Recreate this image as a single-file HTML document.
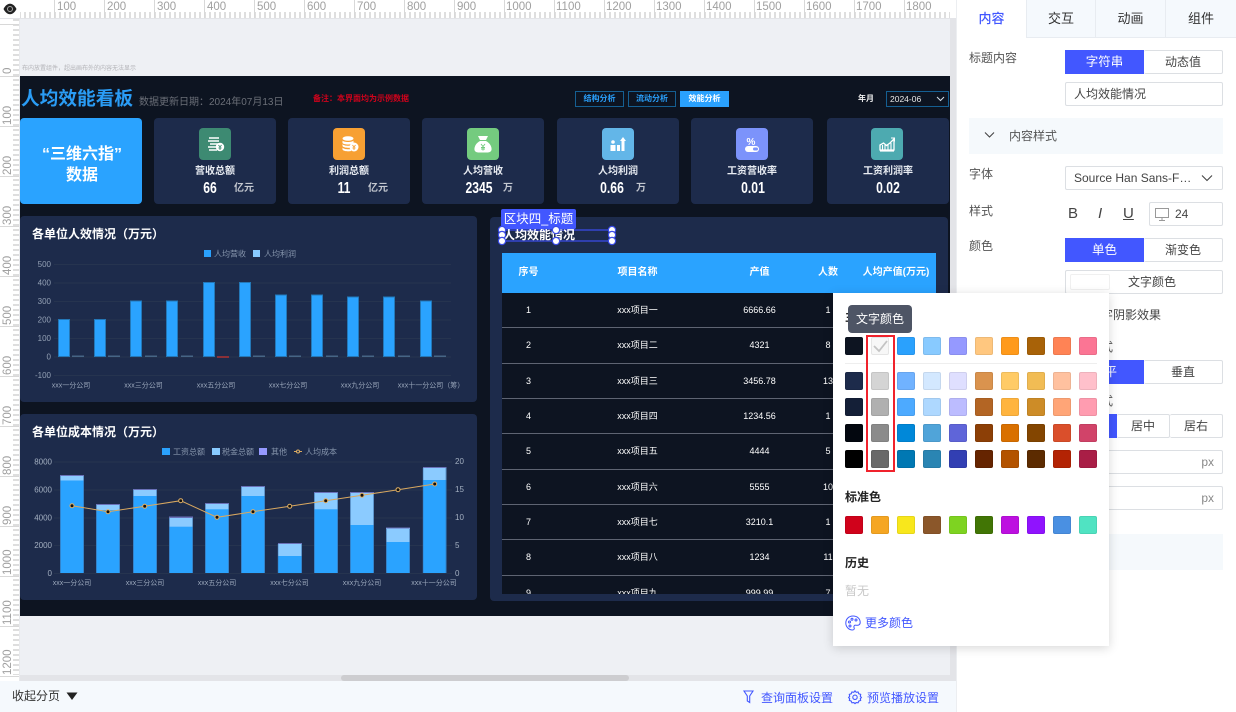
<!DOCTYPE html>
<html lang="zh"><head><meta charset="utf-8"><title>人均效能看板</title>
<style>
*{box-sizing:border-box}
html,body{margin:0;padding:0;width:1236px;height:712px;overflow:hidden;background:#eef0f4;font-family:"Liberation Sans","Noto Sans CJK SC",sans-serif}
.a{position:absolute}
.t{position:absolute;white-space:nowrap;line-height:1}
.c{transform:translateX(-50%)}
.card{position:absolute;top:118px;width:122px;height:86px;background:#1d2b4b;border-radius:4px}
.ic{position:absolute;top:128px;width:32px;height:32px;border-radius:4px}
.lb{position:absolute;top:166px;font-size:10px;font-weight:700;line-height:11px;color:#e8ecf2;white-space:nowrap;transform:translateX(-50%)}
.val{position:absolute;top:180px;font-size:16px;font-weight:700;line-height:17px;color:#fff;white-space:nowrap;transform:translateX(-50%) scaleX(.76)}
.unit{position:absolute;top:183px;font-size:10px;font-weight:700;line-height:11px;color:#c4c8d0;white-space:nowrap}
.panel{position:absolute;background:#1d2b4b;border-radius:4px}
.tab{position:absolute;top:0;height:38px;background:#f5f9fd;border-bottom:1px solid #e8ecf1;border-left:1px solid #e8ecf1;font-size:13px;line-height:37px;text-align:center;color:#333}
.lbl{position:absolute;left:969px;font-size:12px;line-height:14px;color:#555;white-space:nowrap}
.box{position:absolute;background:#fff;border:1px solid #dcdfe3;border-radius:2px;font-size:12px;line-height:22px;color:#444;white-space:nowrap}
.blue{position:absolute;background:#4257ff;color:#fff;font-size:12.5px;line-height:24px;text-align:center}
.row{position:relative;height:35.33px;border-bottom:1px solid #5e6472;font-size:9px;line-height:34px;color:#fff}
.row span{position:absolute;transform:translateX(-50%);white-space:nowrap}
.h{position:absolute;width:6px;height:6px;border-radius:50%;background:#fff;box-shadow:0 0 0 1.2px #3a4be8}
.sw{display:grid;grid-template-columns:repeat(10,18px);column-gap:8px;row-gap:8px;position:absolute;left:845px}
.sw i{display:block;width:18px;height:18px;border-radius:2px;box-shadow:inset 0 0 0 1px rgba(0,0,0,.07)}
.btn{position:absolute;top:91px;height:16px;border:1px solid #155f92;font-size:8px;line-height:14px;text-align:center;color:#2aa1fd;font-weight:700}
svg{position:absolute;overflow:visible}
svg text{font-family:"Liberation Sans","Noto Sans CJK SC",sans-serif}
</style></head><body>

<!-- rulers -->
<div class="a" style="left:0;top:0;width:956px;height:19px;background:#fff;border-bottom:1px solid #e3e4e8"></div>
<div class="a" style="left:20px;top:12px;width:930px;height:6px;background:repeating-linear-gradient(90deg,#dedede 0 2px,#fff 2px 5px);background-position:4px 0"></div>
<svg style="left:0;top:0" width="956" height="19">
<g stroke="#d8d8d8" stroke-width="1"><path d="M54.500 0V18M104.500 0V18M154.500 0V18M204.500 0V18M254.500 0V18M304.500 0V18M354.500 0V18M404.500 0V18M454.500 0V18M504.500 0V18M554.500 0V18M604.500 0V18M654.500 0V18M704.500 0V18M754.500 0V18M804.500 0V18M854.500 0V18M904.500 0V18"/></g>
<g font-size="11.500" fill="#a0a0a0">
<text x="57" y="10">100</text><text x="107" y="10">200</text><text x="157" y="10">300</text><text x="207" y="10">400</text><text x="257" y="10">500</text><text x="307" y="10">600</text><text x="357" y="10">700</text><text x="407" y="10">800</text><text x="457" y="10">900</text><text x="506" y="10">1000</text><text x="556" y="10">1100</text><text x="606" y="10">1200</text><text x="656" y="10">1300</text><text x="706" y="10">1400</text><text x="756" y="10">1500</text><text x="806" y="10">1600</text><text x="856" y="10">1700</text><text x="906" y="10">1800</text>
</g></svg>
<div class="a" style="left:0;top:19px;width:20px;height:662px;background:#fff;border-right:1px solid #e8e9ec"></div>
<div class="a" style="left:13px;top:19px;width:6px;height:656px;background:repeating-linear-gradient(180deg,#dedede 0 2px,#fff 2px 5px)"></div>
<svg style="left:0;top:0" width="20" height="682">
<g stroke="#d8d8d8"><path d="M0 76.500H19M0 126.500H19M0 176.500H19M0 226.500H19M0 276.500H19M0 326.500H19M0 376.500H19M0 426.500H19M0 476.500H19M0 526.500H19M0 576.500H19M0 626.500H19M0 676.500H19M0 24.500H19"/></g>
<g font-size="11.500" fill="#a0a0a0">
<text transform="translate(11,74) rotate(-90)">0</text>
<text transform="translate(11,125) rotate(-90)">100</text><text transform="translate(11,175) rotate(-90)">200</text><text transform="translate(11,225) rotate(-90)">300</text><text transform="translate(11,275) rotate(-90)">400</text><text transform="translate(11,325) rotate(-90)">500</text><text transform="translate(11,375) rotate(-90)">600</text><text transform="translate(11,425) rotate(-90)">700</text><text transform="translate(11,475) rotate(-90)">800</text><text transform="translate(11,525) rotate(-90)">900</text><text transform="translate(11,575) rotate(-90)">1000</text><text transform="translate(11,625) rotate(-90)">1100</text><text transform="translate(11,675) rotate(-90)">1200</text>
</g></svg>
<div class="a" style="left:0;top:0;width:20px;height:18px;background:#fff"></div>
<svg style="left:3px;top:3px" width="14" height="12" viewBox="0 0 14 12"><path d="M0.500 6C2.500 2 5 0.800 7 0.800S11.500 2 13.500 6C11.500 10 9 11.200 7 11.200S2.500 10 0.500 6Z" fill="#222"/><circle cx="7" cy="6" r="2.500" fill="none" stroke="#aaa" stroke-width="1"/></svg>

<div class="t" style="left:22px;top:66px;font-size:6px;color:#b4b4b8">布内放置组件，超出画布外的内容无法显示</div>

<!-- dashboard -->
<div class="a" style="left:20px;top:76px;width:930px;height:540px;background:#0d1421"></div>
<div class="t" style="left:21px;top:90px;font-size:18.700px;font-weight:700;color:#2a9cf5">人均效能看板</div>
<div class="t" style="left:139px;top:98px;font-size:10px;color:#6b6f78">数据更新日期：2024年07月13日</div>
<div class="t" style="left:313px;top:95px;font-size:8px;font-weight:700;color:#d0021b">备注：本界面均为示例数据</div>
<div class="btn" style="left:575px;width:49px">结构分析</div>
<div class="btn" style="left:628px;width:48px">流动分析</div>
<div class="btn" style="left:680px;width:49px;background:#2aa1fd;border-color:#2aa1fd;color:#fff">效能分析</div>
<div class="t" style="left:858px;top:95px;font-size:8px;font-weight:700;color:#f0f0f0">年月</div>
<div class="btn" style="left:886px;width:63px;color:#e8e8e8;text-align:left;padding-left:3px;font-size:8.500px;font-weight:400">2024-06</div>
<svg style="left:936px;top:96px" width="10" height="6"><path d="M1 1L4.500 4.500L8 1" fill="none" stroke="#d8e0e8" stroke-width="1"/></svg>

<div class="card" style="left:20px;background:#2aa3ff"></div>
<div class="t c" style="left:82px;top:147px;font-size:16px;font-weight:700;color:#fff">“三维六指”</div>
<div class="t c" style="left:82px;top:168px;font-size:16px;font-weight:700;color:#fff">数据</div>

<div class="card" style="left:154px"></div>
<div class="card" style="left:288px"></div>
<div class="card" style="left:422px"></div>
<div class="card" style="left:557px"></div>
<div class="card" style="left:691px"></div>
<div class="card" style="left:827px"></div>

<div class="ic" style="left:199px;background:#3d8a72"></div>
<svg style="left:199px;top:128px" width="32" height="32"><path d="M10 10H20M9 13H20M11 16H19M9 19H17M10 22H18" stroke="#fff" stroke-width="1.500"/><circle cx="21" cy="19" r="4.200" fill="#fff"/><path d="M19.500 17L21 19L22.500 17M21 19V22M19.500 20H22.500" stroke="#3d8a72" stroke-width=".9" fill="none"/></svg>
<div class="ic" style="left:333px;background:#f7a033"></div>
<svg style="left:333px;top:128px" width="32" height="32"><ellipse cx="15" cy="10.500" rx="5.500" ry="2.300" fill="#fff"/><path d="M9.500 12.500c1 2 10 2 11 0V15c-1 2-10 2-11 0ZM9.500 16c1 2 7 2 8 1.500v2c-1 .6-7 .5-8-1.500ZM9.500 19.500c1 2 7 2 8.500 1.500v2c-2 .6-7.500.5-8.500-1.500Z" fill="#fff"/><circle cx="21" cy="19" r="4.500" fill="#fff"/><path d="M19.500 17L21 19L22.500 17M21 19V22M19.500 20H22.500" stroke="#f7a033" stroke-width=".9" fill="none"/></svg>
<div class="ic" style="left:467px;background:#74cb7f"></div>
<svg style="left:467px;top:128px" width="32" height="32"><path d="M11 8H21L19 12H13Z" fill="#fff"/><path d="M13 13H19C23 15 25 19 24.500 22C24 24 22 24.500 20 24.500H12C10 24.500 8 24 7.500 22C7 19 9 15 13 13Z" fill="#fff"/><path d="M14 16L16 18.500L18 16M16 18.500V22.500M14 19.500H18M14 21H18" stroke="#74cb7f" stroke-width="1" fill="none"/></svg>
<div class="ic" style="left:601.500px;background:#63b6e8"></div>
<svg style="left:601.500px;top:128px" width="32" height="32"><circle cx="11" cy="14" r="1.800" fill="#fff"/><path d="M8.500 17H13.500V23H8.500Z" fill="#fff"/><rect x="15" y="17" width="3" height="6" fill="#fff"/><path d="M19.500 23V13H18L21 9L24 13H22.500V23Z" fill="#fff"/></svg>
<div class="ic" style="left:736px;background:#7c93fb"></div>
<svg style="left:736px;top:128px" width="32" height="32"><text x="10.500" y="17" font-size="10" font-weight="700" fill="#fff">%</text><rect x="9" y="18" width="14" height="6" rx="3" fill="#fff"/><rect x="17" y="19.500" width="5" height="3" rx="1.500" fill="#7c93fb"/></svg>
<div class="ic" style="left:871px;background:#4daab0"></div>
<svg style="left:871px;top:128px" width="32" height="32"><path d="M9 23H23" stroke="#fff" stroke-width="1.200"/><path d="M9 22V17L12.500 15L15.500 17.500L19 15L23 11V22Z" fill="none" stroke="#fff" stroke-width="1.300"/><path d="M11.500 22V17M14 22V17M17 22V17M20 22V15" stroke="#fff" stroke-width="1.100"/><path d="M20 10H23.500V13.500" fill="none" stroke="#fff" stroke-width="1"/></svg>

<div class="lb" style="left:215px">营收总额</div><div class="val" style="left:209.500px">66</div><div class="unit" style="left:234px">亿元</div>
<div class="lb" style="left:349px">利润总额</div><div class="val" style="left:344px">11</div><div class="unit" style="left:368px">亿元</div>
<div class="lb" style="left:483px">人均营收</div><div class="val" style="left:478.500px">2345</div><div class="unit" style="left:503px">万</div>
<div class="lb" style="left:618px">人均利润</div><div class="val" style="left:612px">0.66</div><div class="unit" style="left:636px">万</div>
<div class="lb" style="left:752px">工资营收率</div><div class="val" style="left:752.500px">0.01</div>
<div class="lb" style="left:888px">工资利润率</div><div class="val" style="left:888px">0.02</div>

<!-- chart 1 -->
<div class="panel" style="left:20px;top:216px;width:457px;height:186px"></div>
<div class="t" style="left:32px;top:228px;font-size:12px;font-weight:700;color:#fff">各单位人效情况（万元）</div>
<svg style="left:0;top:0" width="480" height="410">
<g stroke="#26344f"><path d="M54 264.500H451M54 283H451M54 301.500H451M54 320H451M54 338.500H451M54 357H451M54 375.500H451"/></g>
<g font-size="8" fill="#93a0b4" text-anchor="end"><text x="51" y="267">500</text><text x="51" y="285.500">400</text><text x="51" y="304">300</text><text x="51" y="322.500">200</text><text x="51" y="341">100</text><text x="51" y="359.500">0</text><text x="51" y="378">-100</text></g>
<g fill="#2aa3ff" stroke="#2478b8" stroke-width="1">
<rect x="58.500" y="319.500" width="11" height="37"/><rect x="94.500" y="319.500" width="11" height="37"/><rect x="130.500" y="301" width="11" height="55.500"/><rect x="166.500" y="301" width="11" height="55.500"/><rect x="203.500" y="282.500" width="11" height="74"/><rect x="239.500" y="282.500" width="11" height="74"/><rect x="275.500" y="295" width="11" height="61.500"/><rect x="311.500" y="295" width="11" height="61.500"/><rect x="347.500" y="297" width="11" height="59.500"/><rect x="383.500" y="297" width="11" height="59.500"/><rect x="420.500" y="301" width="11" height="55.500"/></g>
<g fill="#466585"><rect x="72" y="355.500" width="12" height="1.500"/><rect x="108" y="355.500" width="12" height="1.500"/><rect x="145" y="355.500" width="12" height="1.500"/><rect x="181" y="355.500" width="12" height="1.500"/><rect x="253" y="355.500" width="12" height="1.500"/><rect x="289" y="355.500" width="12" height="1.500"/><rect x="326" y="355.500" width="12" height="1.500"/><rect x="362" y="355.500" width="12" height="1.500"/><rect x="398" y="355.500" width="12" height="1.500"/><rect x="434" y="355.500" width="12" height="1.500"/></g>
<rect x="217" y="356" width="12" height="2" fill="#8a3038"/>
<rect x="204" y="250" width="7" height="7" fill="#2aa1fd"/><rect x="253" y="250" width="7" height="7" fill="#88caff"/>
<g font-size="8" fill="#8796ad"><text x="214" y="256.500">人均营收</text><text x="264" y="256.500">人均利润</text></g>
<g font-size="7" fill="#9aa7bb" text-anchor="middle"><text x="71" y="387.500">xxx一分公司</text><text x="143.500" y="387.500">xxx三分公司</text><text x="216" y="387.500">xxx五分公司</text><text x="288" y="387.500">xxx七分公司</text><text x="360" y="387.500">xxx九分公司</text><text x="431" y="387.500">xxx十一分公司（筹）</text></g>
</svg>

<!-- chart 2 -->
<div class="panel" style="left:20px;top:414px;width:457px;height:186px"></div>
<div class="t" style="left:32px;top:426px;font-size:12px;font-weight:700;color:#fff">各单位成本情况（万元）</div>
<svg style="left:0;top:0" width="480" height="610">
<g stroke="#26344f"><path d="M54 462H452M54 490H452M54 518H452M54 545.500H452M54 573.500H452"/></g>
<g font-size="8" fill="#a3afc0" text-anchor="end"><text x="52" y="464.500">8000</text><text x="52" y="492.500">6000</text><text x="52" y="520.500">4000</text><text x="52" y="548">2000</text><text x="52" y="576">0</text></g>
<g font-size="8" fill="#a3afc0"><text x="455" y="464">20</text><text x="455" y="492">15</text><text x="455" y="520">10</text><text x="455" y="548">5</text><text x="455" y="576">0</text></g>
<g fill="#6a71b8"><rect x="60" y="475" width="24" height="1.500"/><rect x="96" y="504" width="24" height="1.500"/><rect x="133" y="489" width="24" height="1.500"/><rect x="169" y="516.500" width="24" height="1.500"/><rect x="205" y="503" width="24" height="1.500"/><rect x="241" y="486" width="24" height="1.500"/><rect x="278" y="543" width="24" height="1.500"/><rect x="314" y="492" width="24" height="1.500"/><rect x="350" y="492" width="24" height="1.500"/><rect x="386" y="527.500" width="24" height="1.500"/><rect x="423" y="467" width="23.500" height="1.500"/></g>
<g fill="#8bcbff"><rect x="60" y="476" width="24" height="5"/><rect x="96" y="505" width="24" height="6"/><rect x="133" y="490" width="24" height="7"/><rect x="169" y="518" width="24" height="9"/><rect x="205" y="504" width="24" height="6"/><rect x="241" y="487" width="24" height="10"/><rect x="278" y="544" width="24" height="13"/><rect x="314" y="493" width="24" height="17"/><rect x="350" y="493" width="24" height="33"/><rect x="386" y="528.500" width="24" height="14"/><rect x="423" y="468" width="23.500" height="13"/></g>
<g fill="#2aa3ff"><rect x="60" y="480.500" width="24" height="92.500"/><rect x="96" y="510" width="24" height="63"/><rect x="133" y="496" width="24" height="77"/><rect x="169" y="526.700" width="24" height="46.300"/><rect x="205" y="509.300" width="24" height="63.700"/><rect x="241" y="496" width="24" height="77"/><rect x="278" y="556" width="24" height="17"/><rect x="314" y="509.300" width="24" height="63.700"/><rect x="350" y="525" width="24" height="48"/><rect x="386" y="542" width="24" height="31"/><rect x="423" y="480" width="23.500" height="93"/></g>
<g stroke="#3a6aa0" fill="none"><path d="M60.500 573V476M83.500 573V476M96.500 573V505M119.500 573V505M133.500 573V490M156.500 573V490M169.500 573V518M192.500 573V518M205.500 573V504M228.500 573V504M241.500 573V487M264.500 573V487M278 573V544M301.500 573V544M314.500 573V493M337.500 573V493M350.500 573V493M373.500 573V493M386.500 573V529M409.500 573V529M423 573V468M446 573V468" opacity=".55"/></g>
<polyline points="72,505.700 108,511.700 144.700,506.300 180.700,500.700 217,517.300 253,511.700 289.700,506.300 325.700,500.700 362,495.300 398,489.700 434.700,484" fill="none" stroke="#d9a860" stroke-width="1"/>
<g fill="#111" stroke="#e0b066" stroke-width="1"><circle cx="72" cy="505.700" r="2"/><circle cx="108" cy="511.700" r="2"/><circle cx="144.700" cy="506.300" r="2"/><circle cx="180.700" cy="500.700" r="2"/><circle cx="217" cy="517.300" r="2"/><circle cx="253" cy="511.700" r="2"/><circle cx="289.700" cy="506.300" r="2"/><circle cx="325.700" cy="500.700" r="2"/><circle cx="362" cy="495.300" r="2"/><circle cx="398" cy="489.700" r="2"/><circle cx="434.700" cy="484" r="2"/></g>
<rect x="162" y="448" width="8" height="7" fill="#2aa1fd"/><rect x="212" y="448" width="8" height="7" fill="#88caff"/><rect x="259" y="448" width="8" height="7" fill="#9599ff"/>
<path d="M294 451.500H302" stroke="#d9a860"/><circle cx="298" cy="451.500" r="1.500" fill="#1d2b4b" stroke="#e0b066"/>
<g font-size="8" fill="#8796ad"><text x="173" y="454.500">工资总额</text><text x="222" y="454.500">税金总额</text><text x="271" y="454.500">其他</text><text x="305" y="454.500">人均成本</text></g>
<g font-size="7" fill="#9aa7bb" text-anchor="middle"><text x="72" y="585">xxx一分公司</text><text x="145" y="585">xxx三分公司</text><text x="217" y="585">xxx五分公司</text><text x="289.500" y="585">xxx七分公司</text><text x="362" y="585">xxx九分公司</text><text x="434" y="585">xxx十一分公司</text></g>
</svg>

<!-- table panel -->
<div class="panel" style="left:490px;top:217px;width:458px;height:384px"></div>
<div class="a" style="left:502px;top:253px;width:434px;height:341px;overflow:hidden;background:#0d1421">
 <div style="height:40px;background:#2aa3ff;position:relative;font-size:10px;font-weight:700;line-height:40px;color:#fff">
  <span class="t c" style="left:26.500px;line-height:40px">序号</span><span class="t c" style="left:135.500px;line-height:40px">项目名称</span><span class="t c" style="left:257.500px;line-height:40px">产值</span><span class="t c" style="left:326px;line-height:40px">人数</span><span class="t c" style="left:394px;line-height:40px">人均产值(万元)</span>
 </div>
 <div class="row"><span style="left:26.500px">1</span><span style="left:135.500px">xxx项目一</span><span style="left:257.500px">6666.66</span><span style="left:326px">1</span></div>
 <div class="row"><span style="left:26.500px">2</span><span style="left:135.500px">xxx项目二</span><span style="left:257.500px">4321</span><span style="left:326px">8</span></div>
 <div class="row"><span style="left:26.500px">3</span><span style="left:135.500px">xxx项目三</span><span style="left:257.500px">3456.78</span><span style="left:326px">13</span></div>
 <div class="row"><span style="left:26.500px">4</span><span style="left:135.500px">xxx项目四</span><span style="left:257.500px">1234.56</span><span style="left:326px">1</span></div>
 <div class="row"><span style="left:26.500px">5</span><span style="left:135.500px">xxx项目五</span><span style="left:257.500px">4444</span><span style="left:326px">5</span></div>
 <div class="row"><span style="left:26.500px">6</span><span style="left:135.500px">xxx项目六</span><span style="left:257.500px">5555</span><span style="left:326px">10</span></div>
 <div class="row"><span style="left:26.500px">7</span><span style="left:135.500px">xxx项目七</span><span style="left:257.500px">3210.1</span><span style="left:326px">1</span></div>
 <div class="row"><span style="left:26.500px">8</span><span style="left:135.500px">xxx项目八</span><span style="left:257.500px">1234</span><span style="left:326px">11</span></div>
 <div class="row"><span style="left:26.500px">9</span><span style="left:135.500px">xxx项目九</span><span style="left:257.500px">999.99</span><span style="left:326px">7</span></div>
</div>
<div class="a" style="left:501px;top:229px;width:110px;height:13px;border:2px solid #2f3fae"></div>
<div class="t" style="left:503px;top:229px;font-size:12px;font-weight:700;color:#fff">人均效能情况</div>
<div class="a" style="left:501px;top:208.500px;width:75px;height:20px;background:#4257ff;border-radius:2px;color:#fff;font-size:12.500px;line-height:20px;text-align:center">区块四_标题</div>
<div class="h" style="left:498.500px;top:226.500px"></div><div class="h" style="left:498.500px;top:232px"></div><div class="h" style="left:498.500px;top:238px"></div>
<div class="h" style="left:553px;top:226.500px"></div><div class="h" style="left:553px;top:238px"></div>
<div class="h" style="left:608.500px;top:226.500px"></div><div class="h" style="left:608.500px;top:232px"></div><div class="h" style="left:608.500px;top:238px"></div>

<!-- scrollbars -->
<div class="a" style="left:950px;top:19px;width:6px;height:662px;background:#e3e4e8"></div>
<div class="a" style="left:20px;top:675px;width:930px;height:6px;background:#e3e4e8"></div>
<div class="a" style="left:341px;top:675px;width:288px;height:6px;background:#cdcdd0;border-radius:3px"></div>

<!-- bottom bar -->
<div class="a" style="left:0;top:681px;width:956px;height:31px;background:#f5f9fd"></div>
<div class="t" style="left:12px;top:690px;font-size:12px;color:#333">收起分页</div>
<svg style="left:66px;top:692px" width="12" height="9"><path d="M0.500 0.500H11.500L6 8Z" fill="#222"/></svg>
<svg style="left:743px;top:690px" width="11" height="14" fill="none" stroke="#4257ff" stroke-width="1.100"><path d="M1 1H10L6.700 6V12.500L4.300 11V6Z"/></svg>
<div class="t" style="left:761px;top:692px;font-size:12px;color:#4257ff">查询面板设置</div>
<svg style="left:848px;top:690px" width="14" height="14" viewBox="0 0 14 14" fill="none" stroke="#4257ff" stroke-width="1.100"><path d="M7 .8L8.200 2.300L10.100 2L10.800 3.800L12.700 4.400L12.300 6.300L13.400 7.500L12.300 8.700L12.700 10.400L10.800 11.100L10.100 12.800L8.200 12.600L7 13.600L5.800 12.600L3.900 12.800L3.200 11.100L1.300 10.400L1.700 8.700L.6 7.500L1.700 6.300L1.300 4.400L3.200 3.800L3.900 2L5.800 2.300Z"/><circle cx="7" cy="7.300" r="2.200"/></svg>
<div class="t" style="left:867px;top:692px;font-size:12px;color:#4257ff">预览播放设置</div>

<!-- right panel -->
<div class="a" style="left:956px;top:0;width:280px;height:712px;background:#fff;border-left:1px solid #eceef1"></div>
<div class="tab" style="left:957px;width:69px;background:#fff;border-left:none;border-bottom:none;color:#4257ff;font-weight:500">内容</div>
<div class="tab" style="left:1026px;width:69px">交互</div>
<div class="tab" style="left:1095px;width:70px">动画</div>
<div class="tab" style="left:1165px;width:71px">组件</div>

<div class="lbl" style="top:51px">标题内容</div>
<div class="blue" style="left:1065px;top:50px;width:79px">字符串</div>
<div class="box" style="left:1144px;top:50px;width:79px;height:24px;text-align:center;border-left:none">动态值</div>
<div class="box" style="left:1065px;top:82px;width:158px;height:24px;padding-left:8px">人均效能情况</div>
<div class="a" style="left:969px;top:118px;width:254px;height:36px;background:#f5f9fc"></div>
<svg style="left:984px;top:131px" width="12" height="8"><path d="M1 1.500L5.500 6L10 1.500" fill="none" stroke="#444" stroke-width="1.100"/></svg>
<div class="t" style="left:1009px;top:130px;font-size:12px;color:#555">内容样式</div>
<div class="lbl" style="top:167px">字体</div>
<div class="box" style="left:1065px;top:166px;width:158px;height:24px;padding-left:8px">Source Han Sans-F…</div>
<svg style="left:1201px;top:174px" width="13" height="8"><path d="M1 1.500L6 6.500L11 1.500" fill="none" stroke="#444" stroke-width="1.100"/></svg>
<div class="lbl" style="top:204px">样式</div>
<div class="t" style="left:1068px;top:206px;font-size:15px;color:#444">B</div>
<div class="t" style="left:1098px;top:206px;font-size:15px;font-style:italic;color:#444">I</div>
<div class="t" style="left:1123px;top:206px;font-size:15px;color:#444;text-decoration:underline">U</div>
<div class="box" style="left:1149px;top:202px;width:74px;height:24px;padding-left:25px">24</div>
<svg style="left:1155px;top:208px" width="15" height="13" fill="none" stroke="#999" stroke-width="1"><rect x=".5" y=".5" width="13" height="9"/><path d="M7 9.500V12M4 12.500H10"/></svg>
<div class="lbl" style="top:239px">颜色</div>
<div class="blue" style="left:1065px;top:238px;width:79px">单色</div>
<div class="box" style="left:1144px;top:238px;width:79px;height:24px;text-align:center;border-left:none">渐变色</div>
<div class="box" style="left:1065px;top:270px;width:158px;height:24px;padding-left:62px">文字颜色</div>
<div class="a" style="left:1070px;top:274px;width:40px;height:16px;background:#fff;border:1px solid #f0f0f0;border-radius:2px"></div>
<div class="t" style="left:1101px;top:309px;font-size:12px;color:#444">字阴影效果</div>
<div class="t" style="left:1089px;top:341px;font-size:12px;color:#555">方式</div>
<div class="blue" style="left:1065px;top:360px;width:79px">水平</div>
<div class="box" style="left:1144px;top:360px;width:79px;height:24px;text-align:center;border-left:none">垂直</div>
<div class="t" style="left:1089px;top:395px;font-size:12px;color:#555">方式</div>
<div class="blue" style="left:1065px;top:414px;width:52px">居左</div>
<div class="box" style="left:1117px;top:414px;width:53px;height:24px;text-align:center;border-left:none">居中</div>
<div class="box" style="left:1170px;top:414px;width:53px;height:24px;text-align:center;border-left:none">居右</div>
<div class="box" style="left:1065px;top:450px;width:158px;height:24px;text-align:right;padding-right:8px;color:#888">px</div>
<div class="box" style="left:1065px;top:486px;width:158px;height:24px;text-align:right;padding-right:8px;color:#888">px</div>
<div class="a" style="left:969px;top:534px;width:254px;height:36px;background:#f5f9fc"></div>

<!-- popup -->
<div class="a" style="left:833px;top:293px;width:276px;height:353px;background:#fff;box-shadow:0 2px 10px rgba(0,0,0,.16)"></div>
<div class="t" style="left:845px;top:311px;font-size:12px;font-weight:700;color:#222">主题色</div>
<div class="a" style="left:848px;top:305px;width:64px;height:28px;background:#4e5565;border-radius:4px;color:#fff;font-size:12px;line-height:28px;text-align:center">文字颜色</div>

<div class="sw" style="top:337px">
<i style="background:#0d1421"></i><i style="background:#f7f7f7"></i><i style="background:#2aa1fd"></i><i style="background:#88caff"></i><i style="background:#9599ff"></i><i style="background:#ffc77f"></i><i style="background:#ff9a1b"></i><i style="background:#a86208"></i><i style="background:#ff8355"></i><i style="background:#fb7594"></i>
</div>
<svg style="left:871px;top:337px" width="18" height="18"><path d="M3 9L8 14L16 4" fill="none" stroke="#c4c4c4" stroke-width="1.800"/></svg>
<div class="a" style="left:845px;top:363px;width:252px;height:1px;background:#eee"></div>
<div class="sw" style="top:372px">
<i style="background:#1d2b4b"></i><i style="background:#d4d4d4"></i><i style="background:#70b2ff"></i><i style="background:#d3e8ff"></i><i style="background:#dfdfff"></i><i style="background:#da934e"></i><i style="background:#ffcb66"></i><i style="background:#f1bc54"></i><i style="background:#ffc19f"></i><i style="background:#ffc0cb"></i>
<i style="background:#141f37"></i><i style="background:#b0b0b0"></i><i style="background:#4daaff"></i><i style="background:#aed8ff"></i><i style="background:#bcbcff"></i><i style="background:#b36524"></i><i style="background:#ffb43e"></i><i style="background:#cd8c27"></i><i style="background:#ffa577"></i><i style="background:#ff9cb0"></i>
<i style="background:#03070f"></i><i style="background:#8b8b8b"></i><i style="background:#0088d9"></i><i style="background:#50a4d9"></i><i style="background:#5f65d9"></i><i style="background:#8c3f06"></i><i style="background:#d97000"></i><i style="background:#834500"></i><i style="background:#da4f2b"></i><i style="background:#d14369"></i>
<i style="background:#000"></i><i style="background:#696969"></i><i style="background:#0078b3"></i><i style="background:#2a85b3"></i><i style="background:#323fb3"></i><i style="background:#652400"></i><i style="background:#b35300"></i><i style="background:#5c2b00"></i><i style="background:#b32304"></i><i style="background:#a91e46"></i>
</div>
<div class="a" style="left:866px;top:335px;width:29px;height:137px;border:2px solid #f0222c"></div>
<div class="t" style="left:845px;top:491px;font-size:12px;font-weight:700;color:#222">标准色</div>
<div class="sw" style="top:516px">
<i style="background:#d0021b"></i><i style="background:#f5a623"></i><i style="background:#f8e71c"></i><i style="background:#8b572a"></i><i style="background:#7ed321"></i><i style="background:#417505"></i><i style="background:#bd10e0"></i><i style="background:#9013fe"></i><i style="background:#4a90e2"></i><i style="background:#50e3c2"></i>
</div>
<div class="t" style="left:845px;top:557px;font-size:12px;font-weight:700;color:#222">历史</div>
<div class="t" style="left:845px;top:585px;font-size:12px;color:#c8c8c8">暂无</div>
<svg style="left:845px;top:615px" width="16" height="16" viewBox="0 0 16 16" fill="none" stroke="#4257ff" stroke-width="1"><path d="M8 1C3.500 1 .8 4.300.8 8C.8 12 4 15 7.500 15C9.500 15 9.500 13.500 9 12.500C8.500 11 9.500 10 11 10.200C13 10.500 15.200 10 15.200 7.500C15.200 3.500 12 1 8 1Z"/><circle cx="4.500" cy="7" r="1"/><circle cx="7" cy="4.300" r="1"/><circle cx="11" cy="5" r="1"/><circle cx="5" cy="11" r="1"/></svg>
<div class="t" style="left:865px;top:617px;font-size:12px;color:#4257ff">更多颜色</div>

</body></html>
